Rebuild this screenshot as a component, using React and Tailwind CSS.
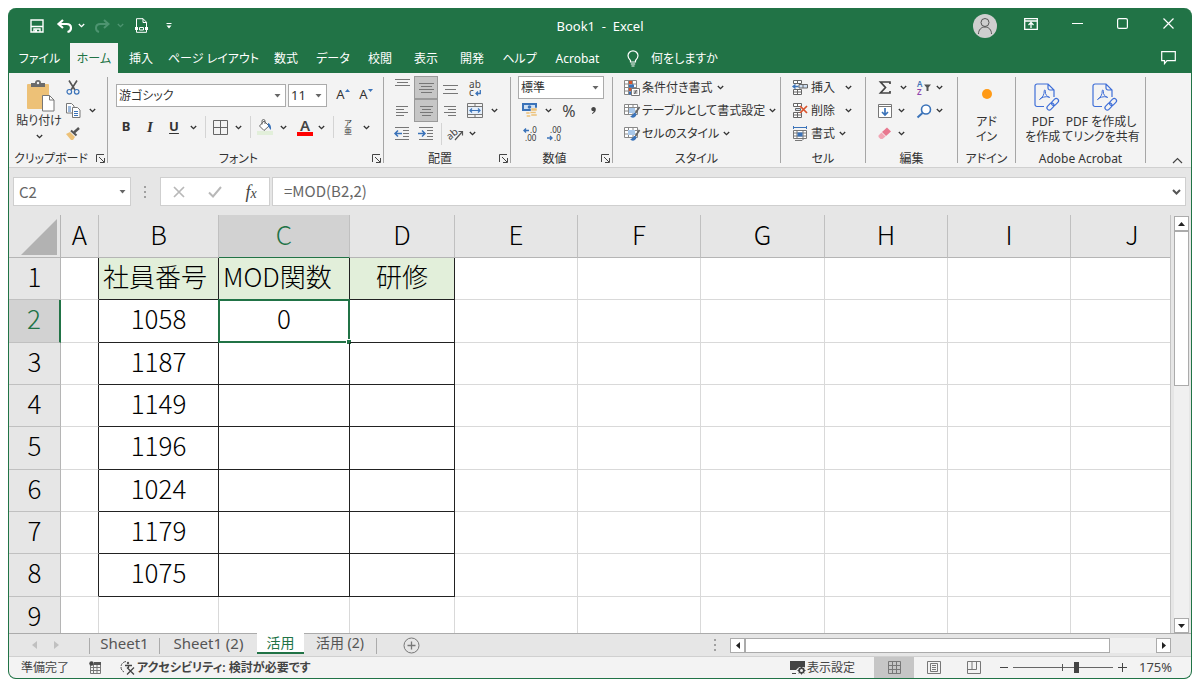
import React, { useState } from 'react';
import clsx from 'clsx';

const tabs = [
  { label: 'ファイル', width: 'w-[61px]' },
  { label: 'ホーム', width: 'w-12', active: true },
  { label: '挿入', width: 'w-[46px]' },
  { label: 'ページ レイアウト', width: 'w-[99px]' },
  { label: '数式', width: 'w-[46px]' },
  { label: 'データ', width: 'w-[48px]' },
  { label: '校閲', width: 'w-[46px]' },
  { label: '表示', width: 'w-[46px]' },
  { label: '開発', width: 'w-[46px]' },
  { label: 'ヘルプ', width: 'w-[49px]' },
  { label: 'Acrobat', width: 'w-[67px]' },
];

const columns = [
  { name: 'A', width: 'w-[38px]' },
  { name: 'B', width: 'w-[120px]' },
  { name: 'C', width: 'w-[131px]' },
  { name: 'D', width: 'w-[105px]' },
  { name: 'E', width: 'w-[123px]' },
  { name: 'F', width: 'w-[123px]' },
  { name: 'G', width: 'w-[124px]' },
  { name: 'H', width: 'w-[123px]' },
  { name: 'I', width: 'w-[123px]' },
  { name: 'J', width: 'w-[123px]' },
];

const rows = [
  { B: '社員番号', C: 'MOD関数', D: '研修' },
  { B: '1058', C: '0' },
  { B: '1187' },
  { B: '1149' },
  { B: '1196' },
  { B: '1024' },
  { B: '1179' },
  { B: '1075' },
  {},
];

const Svg = ({ w, h, className = '', children }) => (
  <svg width={w} height={h} viewBox={`0 0 ${w} ${h}`} fill="none" className={clsx('shrink-0 overflow-visible', className)} aria-hidden="true">
    {children}
  </svg>
);

const Chevron = ({ className = '' }) => (
  <Svg w={7} h={5} className={className}>
    <path d="M.8 1 3.5 3.7 6.2 1" stroke="currentColor" strokeWidth="1.3" />
  </Svg>
);

const Triangle = ({ className = '' }) => (
  <Svg w={7} h={4} className={className}>
    <path d="M.5 0h6l-3 3.5z" fill="#666" />
  </Svg>
);

const IconButton = ({ label, className = '', children }) => (
  <button type="button" aria-label={label} className={clsx('flex items-center justify-center shrink-0', className)}>
    {children}
  </button>
);

const Menu = ({ label, className = 'w-[18px]' }) => (
  <IconButton label={`${label} メニュー`} className={className}>
    <Chevron />
  </IconButton>
);

const Group = ({ label, width, launcher = false, children }) => (
  <>
    <section aria-label={label} className={clsx('flex flex-col shrink-0 h-[91px]', width)}>
      <div className="h-[73px]">{children}</div>
      <div className="flex h-[18px] items-center">
        <span className="flex-1 pt-px text-center whitespace-nowrap">{label}</span>
        {launcher && (
          <IconButton label={`${label}の設定`} className="w-[14px]">
            <Svg w={9} h={9}>
              <path d="M.5 8V.5H8M3 3l5 5M8.5 4v4.500H4" stroke="#444" />
            </Svg>
          </IconButton>
        )}
      </div>
    </section>
    <div className="mt-px h-[86px] w-px shrink-0 bg-[#a6a6a6]" />
  </>
);

/* ---- title bar ---- */

const TitleBar = () => (
  <header className="grid h-[35px] grid-cols-[1fr_auto_1fr] text-white">
    <div className="flex items-center pl-[18px]">
      <IconButton label="上書き保存" className="w-[20px]">
        <Svg w={14} h={14}>
          <path d="M1 1h12v12H1z" stroke="#fff" strokeWidth="1.4" />
          <path d="M1 7.5h12M4 13v-3h6v3" stroke="#fff" strokeWidth="1.4" />
          <path d="M5 10.5h2V13H5z" fill="#fff" />
        </Svg>
      </IconButton>
      <IconButton label="元に戻す" className="ml-2 w-[20px]">
        <Svg w={16} h={14}>
          <path d="M6 1 1.500 5 6 9M2 5h7.500c3 0 4.500 1.800 4.500 4 0 2-1.200 3.500-3.500 4" stroke="#fff" strokeWidth="2.2" />
        </Svg>
      </IconButton>
      <Menu label="元に戻す" className="w-[13px]" />
      <IconButton label="やり直し" className="ml-1 w-[20px] text-[#4d9470]">
        <Svg w={16} h={14}>
          <path d="m10 1 4.500 4L10 9M14 5H6.500C3.500 5 2 6.800 2 9c0 2 1.200 3.500 3 4" stroke="currentColor" strokeWidth="2" />
        </Svg>
      </IconButton>
      <span className="text-[#4d9470]"><Menu label="やり直し" className="w-4" /></span>
      <IconButton label="印刷プレビュー" className="ml-[5px] w-4">
        <Svg w={13} h={15}>
          <path d="M1.500 9V.7h6.500l3.500 3.500V9M8 .7V4.500h3.500M1.500 12v2.300h10V12" stroke="#fff" />
          <path d="M0 9h3v3H0zM10 9h3v3h-3z" fill="#fff" />
          <path d="M4.500 9.500h4v2.500h-4z" stroke="#fff" />
        </Svg>
      </IconButton>
      <IconButton label="クイック アクセスのカスタマイズ" className="ml-[10px] w-[20px]">
        <Svg w={6} h={6} className="mt-px">
          <path d="M.5.5h5" stroke="#fff" />
          <path d="M.5 2.5h5L3 5.5z" fill="#fff" />
        </Svg>
      </IconButton>
    </div>
    <h1 className="flex items-center whitespace-pre pt-[3px] text-[13px]">{'Book1  -  Excel'}</h1>
    <div className="flex items-center justify-end">
      <IconButton label="アカウント" className="mr-[11px] size-6 rounded-full bg-[#cfcfcf]">
        <Svg w={18} h={18}>
          <circle cx="9" cy="5.5" r="4" stroke="#555" />
          <path d="M2.500 17c0-4 2.500-7 6.500-7s6.500 3 6.500 7" stroke="#555" />
        </Svg>
      </IconButton>
      <IconButton label="リボンの表示オプション" className="h-8 w-[46px] pb-1">
        <Svg w={14} h={12}>
          <path d="M.7.7h12.600v10.600H.7zM.7 3h12.600M7 10V5M4.500 7 7 4.500 9.500 7" stroke="#fff" strokeWidth="1.3" />
        </Svg>
      </IconButton>
      <IconButton label="最小化" className="h-8 w-[46px] pb-1">
        <Svg w={11} h={2}><path d="M0 .5h11" stroke="#fff" /></Svg>
      </IconButton>
      <IconButton label="最大化" className="h-8 w-[45px] pb-1">
        <Svg w={11} h={11}><rect x=".6" y=".6" width="9.8" height="9.8" rx="1.5" stroke="#fff" strokeWidth="1.2" /></Svg>
      </IconButton>
      <IconButton label="閉じる" className="h-8 w-[46px] pb-1">
        <Svg w={11} h={11}><path d="m.5.5 10 10M10.5.5l-10 10" stroke="#fff" strokeWidth="1.2" /></Svg>
      </IconButton>
    </div>
  </header>
);

const RibbonTabs = () => (
  <nav className="flex h-[30px] text-white">
    {tabs.map((tab) => (
      <button
        key={tab.label}
        type="button"
        className={clsx('shrink-0 whitespace-nowrap pt-px', tab.width, tab.active && 'bg-[#f3f3f3] text-[#217346]')}
      >
        {tab.label}
      </button>
    ))}
    <button type="button" className="ml-4 flex items-center gap-3 whitespace-nowrap pt-px">
      <Svg w={12} h={17}>
        <path d="M3.500 12V10.500C2 9 1 8 1 5.800a5 5 0 0 1 10 0C11 8 10 9 8.500 10.500V12zM3.800 14h4.400M4.500 16h3" stroke="#fff" strokeWidth="1.2" />
      </Svg>
      何をしますか
    </button>
    <IconButton label="コメント" className="ml-auto w-[46px]">
      <Svg w={15} h={14}>
        <path d="M.7.7h13.600v9H6l-2.500 3v-3H.7z" stroke="#fff" strokeWidth="1.2" />
      </Svg>
    </IconButton>
  </nav>
);

/* ---- ribbon icons ---- */

const PasteIcon = ({ className }) => (
  <Svg w={28} h={32} className={className}>
    <rect x="0" y="4" width="22" height="25" rx="1" fill="#edc177" />
    <path d="M4 3h4a3 3 0 0 1 6 0h4v4H4z" fill="#6b6b6b" />
    <circle cx="11" cy="3" r="1.2" fill="#f3f3f3" />
    <path d="M15.500 15.500h7l4.500 4.500v11H15.500z" fill="#fff" stroke="#777" />
    <path d="M22.500 15.500V20H27" stroke="#777" />
  </Svg>
);

const ScissorsIcon = () => (
  <Svg w={14} h={15}>
    <path d="M3 .5 9 10M11 .5 5 10" stroke="#555" strokeWidth="1.6" />
    <circle cx="3.3" cy="11.8" r="2.3" stroke="#3b73b9" strokeWidth="1.2" />
    <circle cx="10.7" cy="11.8" r="2.3" stroke="#3b73b9" strokeWidth="1.2" />
  </Svg>
);

const CopyIcon = () => (
  <Svg w={15} h={15}>
    <path d="M.5.5h5l2.500 2.500v7H.5z" fill="#fff" stroke="#777" />
    <path d="M2 4h3M2 6h3M2 8h3" stroke="#3b73b9" />
    <path d="M6.500 4.500h5l2.500 2.500v7.500H6.500z" fill="#fff" stroke="#777" />
    <path d="M8 8.500h4M8 10.500h4M8 12.500h4" stroke="#3b73b9" />
  </Svg>
);

const BrushIcon = () => (
  <Svg w={14} h={13}>
    <path d="m0 7 4-2 5 5-2 3H5z" fill="#edc177" />
    <path d="m5 3.500 5.500 5" stroke="#555" strokeWidth="2" />
    <path d="m8 5.500 5-4.500" stroke="#555" strokeWidth="2.4" />
  </Svg>
);

const BordersIcon = () => (
  <Svg w={15} h={15}>
    <path d="M.5.5h14v14H.5zM7.500.5v14M.5 7.500h14" stroke="#666" />
  </Svg>
);

const FillIcon = () => (
  <Svg w={16} h={16}>
    <path d="M0 12h16v4H0z" fill="#e2efda" />
    <path d="m7 2 5 5-5 4.500L2.500 7z" fill="#fff" stroke="#666" />
    <path d="M5 5.500V2a1.500 1.500 0 0 1 3 0v3" stroke="#666" />
    <path d="M11 4c2 .5 3.500 3 3 7-1.500-1-2-3-3-4z" fill="#3b73b9" />
  </Svg>
);

const linePaths = {
  top: 'M0 .5h15M2 3.500h11M0 6.500h15',
  middle: 'M0 .5h15M2 3.500h11M0 6.500h15M2 9.500h11',
  bottom: 'M0 .5h15M2 4.500h11M0 8.500h15',
  left: 'M0 .5h12M0 3.500h8M0 6.500h12M0 9.500h8',
  center: 'M0 .5h13M2 3.500h9M0 6.500h13M2 9.500h9',
  right: 'M0 .5h12M4 3.500h8M0 6.500h12M4 9.500h8',
};

const lineWidths = { top: 15, middle: 15, bottom: 15, left: 12, center: 13, right: 12 };

const Lines = ({ kind, className = '' }) => (
  <Svg w={lineWidths[kind]} h={10} className={className}>
    <path d={linePaths[kind]} stroke="#777" />
  </Svg>
);

const IndentIcon = ({ flip = false }) => (
  <Svg w={16} h={13}>
    <path d="M1 .5h14M9 3.500h6M9 6.500h6M9 9.500h6M1 12.500h14" stroke="#777" />
    <path d={flip ? 'M0 6.500h7M4 3.500l3 3-3 3' : 'M8 6.500H1M4 3.500l-3 3 3 3'} stroke="#3b73b9" strokeWidth="1.5" />
  </Svg>
);

const WrapIcon = () => (
  <span className="flex flex-col text-[10px] leading-[8px] text-[#444]">
    <span>ab</span>
    <span className="flex items-end gap-px">
      c
      <Svg w={6} h={6}>
        <path d="M5.300 0v3.500H1M3 1.500l-2 2 2 2" stroke="#3b73b9" strokeWidth="1.3" />
      </Svg>
    </span>
  </span>
);

const MergeIcon = () => (
  <Svg w={16} h={15}>
    <path d="M.5.5h15v14H.5zM.5 3.500h15M.5 11.500h15M8 .5v3M8 11.500v3" stroke="#777" />
    <path d="M1 4h14v7H1z" fill="#e4eefa" />
    <path d="M3 7.500h10M5 5.500l-2 2 2 2M11 5.500l2 2-2 2" stroke="#3b73b9" strokeWidth="1.2" />
  </Svg>
);

const OrientationIcon = () => (
  <Svg w={16} h={15}>
    <text x="-1" y="11" fontSize="10" fill="#444" fontFamily="Noto Sans" transform="rotate(-40 5 9)">ab</text>
    <path d="m7 14 7-8M10.500 5.500h4v4" stroke="#555" strokeWidth="1.2" />
  </Svg>
);

const CurrencyIcon = () => (
  <Svg w={16} h={15}>
    <path d="M0 0h15v8H0z" fill="#3b73b9" />
    <path d="M2 2h11v4H2z" fill="#cfe0f3" />
    <circle cx="7.5" cy="4" r="1.8" fill="#3b73b9" />
    <path d="M9 5h6v3H9zM8 8.500h6v2H8zM9 11h6v2H9zM4 9h4v2H4zM4.500 12h4v2h-4z" fill="#edc177" stroke="#f3f3f3" strokeWidth=".5" />
  </Svg>
);

const DecimalIcon = ({ add = false }) => (
  <Svg w={14} h={14}>
    <text x={add ? 7 : 3} y="6" fontSize="8" fill="#333" fontFamily="Noto Sans">{add ? '.0' : '.00'}</text>
    <text x={add ? 2 : 7} y="14" fontSize="8" fill="#333" fontFamily="Noto Sans">{add ? '.00' : '.0'}</text>
    <path d={add ? 'M6 3.500H1M3 1.500l-2 2 2 2' : 'M0 11h5M3 9l2 2-2 2'} stroke="#3b73b9" strokeWidth="1.4" />
  </Svg>
);

const ConditionalIcon = () => (
  <Svg w={16} h={16}>
    <path d="M.5.5h12v14H.5zM4.500.5v14M8.500.5v14M.5 4h12M.5 7.500h12M.5 11h12" fill="#fff" stroke="#888" />
    <path d="M5 1h3v3H5zM5 8h3v3H5z" fill="#d9532c" />
    <path d="M5 4.500h5v3H5zM5 11.500h3v3H5z" fill="#3b73b9" />
    <path d="M7.500 8.500h8v7h-8z" fill="#fff" stroke="#777" />
    <path d="M9.500 11h4M9.500 13h4M12.500 10l-2 4" stroke="#444" strokeWidth=".8" />
  </Svg>
);

const TableStyleIcon = ({ cell = false }) => (
  <Svg w={16} h={16}>
    <path d="M.5 1.500h13v10H.5zM.5 4.500h13M.5 8h13M4.500 1.500v10M9 1.500v10" fill="#fff" stroke="#888" />
    <path d={cell ? 'M4 4h7v5H4z' : 'M5 5h6v5H5z'} fill="#a9c8ea" />
    <path d="m15.500 4-4 6" stroke="#666" strokeWidth="1.8" />
    <path d="M11.500 10c-2.500-.5-2.500 2.500-5.500 3.500 2 2 6 1.500 6.500-2.500z" fill="#3b73b9" />
  </Svg>
);

const CellsIcon = ({ kind }) => (
  <Svg w={16} h={15}>
    {kind === 'format' ? (
      <>
        <path d="M1.500 4.500h13v8h-13zM5 4.500v8M11 4.500v8M1.500 7h13M1.500 10h13" fill="#fff" stroke="#777" />
        <path d="M5.500 6.500h5v4h-5z" fill="#3b73b9" />
        <path d="M2 1.500h12M1.500 0v3M14.500 0v3" stroke="#3b73b9" />
        <path d="M3 14.500h7l2-2" stroke="#777" />
      </>
    ) : (
      <>
        <path d="M1.500.5h8v3h-8zM5.500.5v3M1.500 9.500h8v5h-8zM5.500 9.500v5M1.500 12h8" fill="#fff" stroke="#666" />
        {kind === 'insert' ? (
          <>
            <path d="M7 4.500h8.500v3.500H7zM11 4.500v3.500" fill="#cfe0f3" stroke="#666" />
            <path d="M6.500 6.500H1M3.500 4.500l-2.500 2 2.500 2" stroke="#3b73b9" strokeWidth="1.3" />
          </>
        ) : (
          <>
            <path d="M3.500 5.500h5v2h-5z" fill="#cfe0f3" stroke="#666" />
            <path d="m8 3 7 7M15 3l-7 7" stroke="#d9532c" strokeWidth="1.7" />
          </>
        )}
      </>
    )}
  </Svg>
);

const PdfIcon = () => (
  <Svg w={26} h={29} className="ml-2">
    <path d="M10 23.500H3a2 2 0 0 1-2-2V3a2 2 0 0 1 2-2h11l6 6v7M14 1v4a2 2 0 0 0 2 2h4" stroke="#3f6fd8" strokeWidth="1.2" />
    <path d="M5.500 16.500c3-1.500 5-5.500 4.700-8.500 0-1.400 1.400-1.400 1.200.3-.4 3 1.600 5.700 4.600 6.200M5.500 16.500c1.500-2 6-3.500 9.500-2.500" stroke="#3f6fd8" />
    <rect x="-4" y="-2.300" width="8" height="4.600" rx="2.300" transform="translate(16.500 23.500) rotate(-45)" stroke="#3f6fd8" strokeWidth="1.200" />
    <rect x="-4" y="-2.300" width="8" height="4.600" rx="2.300" transform="translate(21 19) rotate(-45)" stroke="#3f6fd8" strokeWidth="1.200" />
  </Svg>
);

/* ---- ribbon ---- */

const Dropdown = ({ label, value, className }) => (
  <div className={clsx('relative h-[23px] border border-[#ababab] bg-white', className)}>
    <select aria-label={label} defaultValue={value} className="h-full w-full appearance-none pl-[2px] text-[#333]">
      <option>{value}</option>
    </select>
    <Triangle className="pointer-events-none absolute right-1 top-[9px]" />
  </div>
);

const StyleButton = ({ icon, label }) => (
  <button type="button" className="flex h-[23px] items-center gap-[2px] whitespace-nowrap">
    {icon}
    {label}
    <Chevron className="ml-[2px]" />
  </button>
);

const CellsButton = ({ kind, label, gap = 'ml-[10px]' }) => (
  <button type="button" className="flex h-[23px] items-center whitespace-nowrap">
    <CellsIcon kind={kind} />
    <span className="ml-[3px]">{label}</span>
    <Chevron className={gap} />
  </button>
);

const PdfButton = ({ lines }) => (
  <button type="button" className="flex flex-col items-center whitespace-nowrap pt-[7px] leading-[15px]">
    <PdfIcon />
    {lines.map((line, i) => <span key={line} className={i === 0 ? 'mt-[2px]' : ''}>{line}</span>)}
  </button>
);

const Divider = ({ className = '' }) => <div className={clsx('h-[22px] w-px bg-[#d4d4d4]', className)} />;

const Ribbon = () => (
  <div className="flex border-b border-[#d0d0d0] bg-[#f3f3f3] pt-[3px] text-[#333]">
    <Group label="クリップボード" width="w-[98px]" launcher>
      <div className="flex">
        <button type="button" className="flex w-[52px] flex-col items-center whitespace-nowrap pl-[8px] pt-[4px]">
          <PasteIcon className="ml-1" />
          <span className="mt-px leading-4">貼り付け</span>
          <Chevron className="mt-[5px]" />
        </button>
        <div className="flex flex-col">
          <IconButton label="切り取り" className="h-[23px] w-6"><ScissorsIcon /></IconButton>
          <div className="flex h-[23px]">
            <IconButton label="コピー" className="w-6"><CopyIcon /></IconButton>
            <Menu label="コピー" className="w-[14px]" />
          </div>
          <IconButton label="書式のコピー" className="h-[23px] w-6"><BrushIcon /></IconButton>
        </div>
      </div>
    </Group>

    <Group label="フォント" width="w-[275px]" launcher>
      <div className="flex items-center pl-2 pt-2">
        <Dropdown label="フォント名" value="游ゴシック" className="w-[170px]" />
        <Dropdown label="フォント サイズ" value="11" className="ml-[2px] w-[39px] text-[13px]" />
        <div className="flex pb-[3px] text-[13px] leading-[18px]">
          <IconButton label="フォント サイズの拡大" className="ml-[9px] w-[14px]">
            A<Svg w={5} h={3} className="mb-2"><path d="M0 3h5L2.500 0z" fill="#3b73b9" /></Svg>
          </IconButton>
          <IconButton label="フォント サイズの縮小" className="ml-[9px] w-[14px]">
            A<Svg w={5} h={3} className="mb-2"><path d="M0 0h5L2.500 3z" fill="#3b73b9" /></Svg>
          </IconButton>
        </div>
      </div>
      <div className="mt-2 flex h-6 items-center pl-[6px] text-[13px]">
        <IconButton label="太字" className="w-6 font-bold">B</IconButton>
        <IconButton label="斜体" className="w-6 font-['Liberation_Serif'] text-[15px] font-bold italic">I</IconButton>
        <IconButton label="下線" className="w-6 font-bold underline underline-offset-2">U</IconButton>
        <Menu label="下線" className="w-[14px]" />
        <Divider className="ml-[5px]" />
        <IconButton label="罫線" className="ml-[2px] w-6"><BordersIcon /></IconButton>
        <Menu label="罫線" className="w-3" />
        <Divider className="ml-[6px]" />
        <IconButton label="塗りつぶしの色" className="ml-[2px] w-6"><FillIcon /></IconButton>
        <Menu label="塗りつぶしの色" className="w-3" />
        <IconButton label="フォントの色" className="ml-[6px] w-5 flex-col">
          <span className="text-[15px] font-semibold leading-[14px] text-[#444]">A</span>
          <span className="h-1 w-4 bg-[#f00]" />
        </IconButton>
        <Menu label="フォントの色" className="w-3" />
        <Divider className="ml-[6px]" />
        <IconButton label="ふりがな" className="ml-[2px] w-6">
          <span className="flex flex-col text-[8px] leading-[8px]"><span>ア</span><span>亜</span></span>
        </IconButton>
        <Menu label="ふりがな" className="w-3" />
      </div>
    </Group>

    <Group label="配置" width="w-[126px]" launcher>
      <div className="flex h-[23px] pl-[6px]">
        <IconButton label="上揃え" className="w-6"><Lines kind="top" className="-mt-2" /></IconButton>
        <IconButton label="上下中央揃え" className="w-6 border border-[#9a9a9a] bg-[#c6c6c6]"><Lines kind="middle" /></IconButton>
        <IconButton label="下揃え" className="w-6"><Lines kind="bottom" className="mt-1" /></IconButton>
        <IconButton label="折り返して全体を表示する" className="w-[26px]"><WrapIcon /></IconButton>
      </div>
      <div className="flex h-[23px] pl-[6px]">
        <IconButton label="左揃え" className="w-6"><Lines kind="left" /></IconButton>
        <IconButton label="中央揃え" className="w-6 border border-[#9a9a9a] bg-[#c6c6c6]"><Lines kind="center" /></IconButton>
        <IconButton label="右揃え" className="w-6"><Lines kind="right" /></IconButton>
        <IconButton label="セルを結合して中央揃え" className="w-[26px]"><MergeIcon /></IconButton>
        <Menu label="結合" className="w-3" />
      </div>
      <div className="flex h-[23px] items-center pl-[6px]">
        <IconButton label="インデントを減らす" className="w-6"><IndentIcon /></IconButton>
        <IconButton label="インデントを増やす" className="w-6"><IndentIcon flip /></IconButton>
        <Divider className="ml-[3px]" />
        <IconButton label="方向" className="ml-[2px] w-6"><OrientationIcon /></IconButton>
        <Menu label="方向" className="w-2" />
      </div>
    </Group>

    <Group label="数値" width="w-[101px]" launcher>
      <div className="pl-[7px]">
        <Dropdown label="表示形式" value="標準" className="w-[86px]" />
        <div className="flex h-[23px] items-center">
          <IconButton label="通貨表示形式" className="w-6"><CurrencyIcon /></IconButton>
          <Menu label="通貨" className="w-3" />
          <IconButton label="パーセント スタイル" className="ml-[3px] w-6 text-[16px] text-[#444]">%</IconButton>
          <IconButton label="桁区切りスタイル" className="w-6">
            <Svg w={5} h={7}>
              <path d="M2.500 0C4 0 5 1 4.800 2.800 4.600 4.800 3.200 6.300 1 7V6c1-.4 1.700-1 1.900-1.800C1.300 4.400.3 3.400.3 2.200.3 1 1.200 0 2.500 0z" fill="#444" />
            </Svg>
          </IconButton>
        </div>
        <div className="flex h-[23px] items-center">
          <IconButton label="小数点以下の表示桁数を増やす" className="w-6"><DecimalIcon add /></IconButton>
          <IconButton label="小数点以下の表示桁数を減らす" className="w-6"><DecimalIcon /></IconButton>
        </div>
      </div>
    </Group>

    <Group label="スタイル" width="w-[167px]">
      <div className="pl-[11px]">
        <StyleButton icon={<ConditionalIcon />} label="条件付き書式" />
        <StyleButton icon={<TableStyleIcon />} label="テーブルとして書式設定" />
        <StyleButton icon={<TableStyleIcon cell />} label="セルのスタイル" />
      </div>
    </Group>

    <Group label="セル" width="w-[84px]">
      <div className="pl-[11px]">
        <CellsButton kind="insert" label="挿入" />
        <CellsButton kind="delete" label="削除" />
        <CellsButton kind="format" label="書式" gap="ml-1" />
      </div>
    </Group>

    <Group label="編集" width="w-[91px]">
      <div className="flex h-[23px] items-center pl-[7px]">
        <IconButton label="オート SUM" className="w-6">
          <Svg w={12} h={13}><path d="M11 3V1H1.500l5 5.500-5 5.500H11v-2" stroke="#444" strokeWidth="1.7" /></Svg>
        </IconButton>
        <Menu label="オート SUM" className="w-3" />
        <IconButton label="並べ替えとフィルター" className="ml-[5px] w-5">
          <Svg w={14} h={14}>
            <text x="0" y="6" fontSize="8" fontWeight="600" fill="#3b73b9" fontFamily="Noto Sans">A</text>
            <text x="0" y="14" fontSize="8" fontWeight="600" fill="#8e44ad" fontFamily="Noto Sans">Z</text>
            <path d="M7 3.500h7l-2.500 3V10h-2V6.500z" fill="#555" />
          </Svg>
        </IconButton>
        <Menu label="並べ替え" className="w-[10px]" />
      </div>
      <div className="flex h-[23px] items-center pl-[7px]">
        <IconButton label="フィル" className="w-6">
          <Svg w={14} h={14}>
            <path d="M.5.5h13v13H.5z" fill="#fff" stroke="#777" />
            <path d="M.5 2.500h13" stroke="#777" />
            <path d="M7 4v7M4 8l3 3 3-3" stroke="#3b73b9" strokeWidth="1.7" />
          </Svg>
        </IconButton>
        <Menu label="フィル" className="w-2" />
        <IconButton label="検索と選択" className="ml-[9px] w-5">
          <Svg w={15} h={14}>
            <circle cx="9" cy="5.5" r="4.5" fill="#fff" stroke="#3b73b9" strokeWidth="1.6" />
            <path d="m5.500 9-5 4.500" stroke="#3b73b9" strokeWidth="2" />
          </Svg>
        </IconButton>
        <Menu label="検索" className="w-[10px]" />
      </div>
      <div className="flex h-[23px] items-center pl-[7px]">
        <IconButton label="クリア" className="w-6">
          <Svg w={14} h={13}>
            <path d="m4 5 5-4.500 4 4L8 9z" fill="#e8788f" />
            <path d="m3.500 5.500 4 4-3 2.500H2.500L.5 10V8.500z" fill="#f2a5b4" />
          </Svg>
        </IconButton>
        <Menu label="クリア" className="w-2" />
      </div>
    </Group>

    <Group label="アドイン" width="w-[57px]">
      <button type="button" className="flex w-full flex-col items-center pt-3 leading-[15px]">
        <Svg w={12} h={12} className="mb-[14px]"><circle cx="6" cy="6" r="5" fill="#ff9a16" /></Svg>
        <span>アド</span>
        <span>イン</span>
      </button>
    </Group>

    <Group label="Adobe Acrobat" width="w-[129px]">
      <div className="flex justify-center gap-[2px] pl-1">
        <PdfButton lines={['PDF', 'を作成']} />
        <PdfButton lines={['PDF を作成し', 'てリンクを共有']} />
      </div>
    </Group>

    <IconButton label="リボンを折りたたむ" className="ml-auto h-[14px] w-[28px] self-end">
      <Svg w={11} h={7}><path d="m1 6 4.500-4.500L10 6" stroke="#444" strokeWidth="1.2" /></Svg>
    </IconButton>
  </div>
);

/* ---- formula bar ---- */

const Dots = () => (
  <Svg w={3} h={12}>
    <path d="M0 0h2v2H0zM0 5h2v2H0zM0 10h2v2H0z" fill="#a0a0a0" />
  </Svg>
);

const FormulaBar = () => (
  <div className="flex h-[47px] items-start bg-[#e6e6e6] pl-1 pr-[5px] pt-[9px] text-[#666]">
    <div className="flex h-[29px] w-[118px] items-center border border-[#cfcfcf] bg-white pr-1">
      <input aria-label="名前ボックス" defaultValue="C2" className="w-0 flex-1 pl-[5px] pt-[2px] text-[15px] outline-none" />
      <Triangle />
    </div>
    <div className="flex h-[29px] w-[29px] items-center justify-center"><Dots /></div>
    <div className="flex h-[29px] w-[110px] items-center border border-[#cfcfcf] bg-white">
      <IconButton label="キャンセル" className="w-9">
        <Svg w={12} h={12}><path d="m1 1 10 10M11 1 1 11" stroke="#b8b8b8" strokeWidth="1.7" /></Svg>
      </IconButton>
      <IconButton label="入力" className="w-9">
        <Svg w={14} h={12}><path d="m1 6.500 4 4L13 1" stroke="#b8b8b8" strokeWidth="2" /></Svg>
      </IconButton>
      <IconButton label="関数の挿入" className="w-9 font-['Liberation_Serif'] text-[18px] italic leading-6 text-[#444]">
        f<span className="pt-1 text-[14px]">x</span>
      </IconButton>
    </div>
    <div className="ml-[2px] flex h-[29px] flex-1 items-center border border-[#cfcfcf] bg-white pr-1">
      <input aria-label="数式バー" defaultValue="=MOD(B2,2)" className="w-0 flex-1 pb-px pl-[11px] text-[15px] outline-none" />
      <IconButton label="数式バーの展開">
        <Svg w={9} h={6}><path d="m1 1 3.500 3.500L8 1" stroke="#555" strokeWidth="2" /></Svg>
      </IconButton>
    </div>
  </div>
);

/* ---- sheet ---- */

const cellBorder = (col, row) => {
  const boxed = 'BCD'.includes(col) && row <= 8;
  if (boxed) return 'border-[#222]';
  if (col === 'A' && row <= 8) return 'border-r-[#222] border-b-[#d9d9d9]';
  return 'border-[#d9d9d9]';
};

const Sheet = () => (
  <div className="flex h-[418px]">
    <div className="min-w-0 flex-1 overflow-hidden border-r border-[#c4c4c4] bg-white">
      <table className="h-[424px] w-[1186px] table-fixed border-separate border-spacing-0 text-[26px] leading-8 text-black">
        <colgroup>
          <col className="w-[52px]" />
          {columns.map((c) => <col key={c.name} className={c.width} />)}
          <col />
        </colgroup>
        <thead>
          <tr className="h-[43px]">
            <th aria-label="すべて選択" className="border-b border-r border-[#b5b5b5] bg-[#e6e6e6] p-0 align-bottom">
              <Svg w={36} h={36} className="mb-[2px] ml-3"><path d="M36 0v36H0z" fill="#b2b2b2" /></Svg>
            </th>
            {columns.map((c) => (
              <th
                key={c.name}
                scope="col"
                className={clsx(
                  'border-b border-r border-r-[#c0c0c0] p-0 pb-[5px] font-light',
                  c.name === 'C' ? 'border-b-[#217346] bg-[#d2d2d2] text-[#217346]' : 'border-b-[#b5b5b5] bg-[#e6e6e6]'
                )}
              >
                {c.name}
              </th>
            ))}
            <th className="bg-[#e6e6e6]" />
          </tr>
        </thead>
        <tbody>
          {rows.map((cells, i) => (
            <tr key={i}>
              <th
                scope="row"
                className={clsx(
                  'border-b border-b-[#c0c0c0] p-0 pb-[5px] font-light',
                  i === 1 ? 'border-r-2 border-r-[#217346] bg-[#d2d2d2] text-[#217346]' : 'border-r border-r-[#b5b5b5] bg-[#e6e6e6]'
                )}
              >
                {i + 1}
              </th>
              {columns.map(({ name }) => (
                <td
                  key={name}
                  className={clsx(
                    'relative whitespace-nowrap border-b border-r p-0 pb-[5px] font-light',
                    cellBorder(name, i + 1),
                    i === 0 && cells[name] && 'bg-[#e2efda]',
                    i === 0 && (name === 'B' || name === 'C') ? 'pl-1 text-left' : 'text-center'
                  )}
                >
                  {cells[name]}
                  {name === 'C' && i === 1 && (
                    <div className="absolute -bottom-px -left-px -right-px -top-px border-2 border-[#217346]">
                      <span className="absolute -bottom-[3px] -right-[3px] size-[5px] border-l border-t border-white bg-[#217346]" />
                    </div>
                  )}
                </td>
              ))}
              <td />
            </tr>
          ))}
        </tbody>
      </table>
    </div>
    <div className="flex w-5 flex-col items-center bg-[#e6e6e6] pt-px">
      <IconButton label="上へスクロール" className="h-[15px] w-[15px] border border-[#ababab] bg-white">
        <Svg w={7} h={4}><path d="M0 4h7L3.500 0z" fill="#222" /></Svg>
      </IconButton>
      <div className="h-[155px] w-[15px] border border-[#ababab] bg-white" />
      <div className="w-[15px] flex-1 bg-[#f0f0f0]" />
      <IconButton label="下へスクロール" className="h-[15px] w-[15px] border border-[#ababab] bg-white">
        <Svg w={7} h={4}><path d="M0 0h7L3.500 4z" fill="#222" /></Svg>
      </IconButton>
    </div>
  </div>
);

const SheetTabs = () => (
  <div className="flex h-[23px] border-t border-[#ababab] bg-[#e6e6e6] text-[14px] text-[#555]">
    <IconButton label="前のシート" className="ml-[14px] w-[22px]">
      <Svg w={5} h={8}><path d="M5 0v8L0 4z" fill="#c0c0c0" /></Svg>
    </IconButton>
    <IconButton label="次のシート" className="w-[22px]">
      <Svg w={5} h={8}><path d="M0 0v8l5-4z" fill="#c0c0c0" /></Svg>
    </IconButton>
    <div className="ml-[22px] mt-1 h-4 w-px bg-[#ababab]" />
    <button type="button" className="h-[18px] w-[69px] text-[15px] leading-4">Sheet1</button>
    <div className="mt-1 h-4 w-px bg-[#ababab]" />
    <button type="button" className="h-[18px] w-[97px] whitespace-nowrap text-[15px] leading-4">Sheet1 (2)</button>
    <button type="button" className="-mt-px h-[21px] w-[47px] border-b-2 border-[#217346] bg-white leading-4 text-[#217346]">活用</button>
    <button type="button" className="h-[18px] w-[72px] whitespace-nowrap leading-4">活用 (2)</button>
    <div className="mt-1 h-4 w-px bg-[#ababab]" />
    <IconButton label="新しいシート" className="ml-[22px] w-6">
      <Svg w={17} h={17}>
        <circle cx="8.5" cy="8.5" r="7.5" stroke="#777" />
        <path d="M8.500 4.500v8M4.500 8.500h8" stroke="#777" strokeWidth="1.3" />
      </Svg>
    </IconButton>
    <div className="ml-auto flex items-center pr-5">
      <Dots />
      <IconButton label="左へスクロール" className="ml-[13px] size-[15px] border border-[#ababab] bg-white">
        <Svg w={4} h={7}><path d="M4 0v7L0 3.500z" fill="#222" /></Svg>
      </IconButton>
      <div className="h-[15px] w-[365px] border border-[#ababab] bg-white" />
      <div className="h-[15px] w-[46px] bg-[#f0f0f0]" />
      <IconButton label="右へスクロール" className="size-[15px] border border-[#ababab] bg-white">
        <Svg w={4} h={7}><path d="M0 0v7l4-3.500z" fill="#222" /></Svg>
      </IconButton>
    </div>
  </div>
);

const StatusBar = () => {
  const [zoom, setZoom] = useState(64);

  return (
    <footer className="flex h-[22px] items-center border-t border-[#d0d0d0] bg-[#f3f3f3] pl-3 text-[#444]">
      <span>準備完了</span>
      <IconButton label="マクロの記録" className="ml-5">
        <Svg w={13} h={13}>
          <path d="M1.500 3.500h10v9h-10zM1.500 6.500h10M1.500 9.500h10M4.500 4v8M8 4v8" stroke="#777" />
          <path d="M5 1h7v3H5z" fill="#555" />
          <circle cx="2.5" cy="2.5" r="2.2" fill="#444" />
        </Svg>
      </IconButton>
      <button type="button" className="ml-[18px] flex items-center gap-[2px] font-semibold">
        <Svg w={15} h={15}>
          <path d="M6 1.500C3 2 1 4 1 7s1.500 4 3 5" stroke="#555" strokeDasharray="3 1" />
          <circle cx="8" cy="3" r="1.2" fill="#555" />
          <path d="M5 5.500h7M8.500 5.500V8M7 7.500l7 7M14 7.500l-7 7" stroke="#444" strokeWidth="1.3" />
        </Svg>
        アクセシビリティ: 検討が必要です
      </button>
      <div className="ml-auto flex h-full items-center">
        <button type="button" className="flex items-center gap-px">
          <Svg w={16} h={15}>
            <path d="M0 1h15v6H9l-3 3H0zM2 13h4v1H2z" fill="#444" />
            <path d="M11.500 6.500v8M7.500 10.500h8M8.700 7.700l5.600 5.600M14.300 7.700l-5.600 5.600" stroke="#444" />
            <circle cx="11.5" cy="10.5" r="2.5" stroke="#444" strokeWidth="1.5" />
            <circle cx="11.5" cy="10.5" r="1.5" fill="#f3f3f3" />
          </Svg>
          表示設定
        </button>
        <IconButton label="標準" className="ml-[19px] h-full w-10 bg-[#c6c6c6]">
          <Svg w={13} h={13}><path d="M.5.5h12v12H.5zM4.500.5v12M8.500.5v12M.5 4.500h12M.5 8.500h12" stroke="#777" /></Svg>
        </IconButton>
        <IconButton label="ページ レイアウト" className="h-full w-10">
          <Svg w={14} h={13}><path d="M.5.5h13v12H.5zM3.500 2.500h7v8h-7zM5 4.500h4M5 6.500h4M5 8.500h4" stroke="#777" /></Svg>
        </IconButton>
        <IconButton label="改ページ プレビュー" className="h-full w-10">
          <Svg w={14} h={13}><path d="M.5.5h13v12H.5zM.5 8.500h9v-8M5 .5v8" stroke="#777" /></Svg>
        </IconButton>
        <IconButton label="縮小" className="ml-[5px] w-[10px]">
          <Svg w={8} h={9}><path d="M0 4.500h8" stroke="#444" /></Svg>
        </IconButton>
        <div className="relative mx-1 flex h-4 items-center">
          <span className="absolute left-[49px] h-[7px] w-px bg-[#555]" />
          <input
            type="range"
            aria-label="ズーム"
            value={zoom}
            onChange={(e) => setZoom(Number(e.target.value))}
            className="h-3 w-[100px] appearance-none bg-transparent [&::-webkit-slider-runnable-track]:h-px [&::-webkit-slider-runnable-track]:bg-[#666] [&::-webkit-slider-thumb]:-mt-[5px] [&::-webkit-slider-thumb]:h-[11px] [&::-webkit-slider-thumb]:w-[5px] [&::-webkit-slider-thumb]:appearance-none [&::-webkit-slider-thumb]:bg-[#444]"
          />
        </div>
        <IconButton label="拡大" className="w-[10px]">
          <Svg w={9} h={9}><path d="M0 4.500h9M4.500 0v9" stroke="#444" /></Svg>
        </IconButton>
        <span className="w-16 pl-3 text-[13px]">175%</span>
      </div>
    </footer>
  );
};

export default function App() {
  return (
    <div className="min-h-screen bg-white p-2 pb-[9px]">
      <div className="overflow-hidden rounded-lg border border-t-0 border-[#217346] bg-[#217346] font-['Noto_Sans','Noto_Sans_CJK_JP',sans-serif] text-[12px] [font-feature-settings:'palt']">
        <TitleBar />
        <RibbonTabs />
        <Ribbon />
        <main className="font-['Noto_Sans_CJK_JP',sans-serif] [font-feature-settings:normal]">
          <FormulaBar />
          <Sheet />
        </main>
        <SheetTabs />
        <StatusBar />
      </div>
    </div>
  );
}
